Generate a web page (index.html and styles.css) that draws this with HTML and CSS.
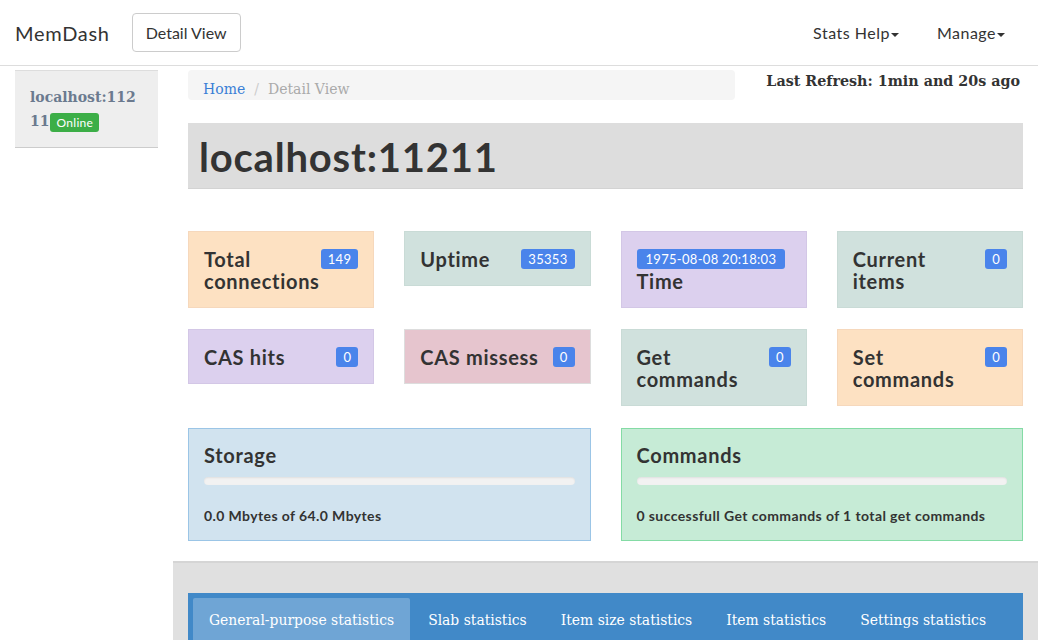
FILE: index.html
```html
<!DOCTYPE html>
<html>
<head>
<meta charset="utf-8">
<link rel="stylesheet" href="styles.css">
</head>
<body>
<nav class="navbar">
  <div class="brand">MemDash</div>
  <div class="nav-btn">Detail View</div>
  <div class="nav-spacer"></div>
  <div class="nav-item">Stats Help<span class="caret"></span></div>
  <div class="nav-item">Manage<span class="caret"></span></div>
</nav>
<div class="layout">
  <aside class="sidebar">
    <div class="server">localhost:11211<span class="online">Online</span></div>
  </aside>
  <main class="main">
    <div class="content">
      <div class="top-row">
        <div class="breadcrumb"><span class="crumb-link">Home</span><span class="crumb-sep">/</span><span class="crumb-active">Detail View</span></div>
        <div class="refresh">Last Refresh: 1min and 20s ago</div>
      </div>
      <div class="page-header"><h1>localhost:11211</h1></div>
      <div class="cards">
        <div class="card peach"><span class="badge">149</span><h4>Total connections</h4></div>
        <div class="card teal"><span class="badge">35353</span><h4>Uptime</h4></div>
        <div class="card lilac"><div class="badge-line"><span class="badge badge-block">1975-08-08 20:18:03</span></div><h4>Time</h4></div>
        <div class="card teal"><span class="badge">0</span><h4>Current items</h4></div>
      </div>
      <div class="cards">
        <div class="card lilac"><span class="badge">0</span><h4>CAS hits</h4></div>
        <div class="card pink"><span class="badge">0</span><h4>CAS missess</h4></div>
        <div class="card teal"><span class="badge">0</span><h4>Get commands</h4></div>
        <div class="card peach"><span class="badge">0</span><h4>Set commands</h4></div>
      </div>
      <div class="wide-cards">
        <div class="panel blue">
          <h4>Storage</h4>
          <div class="progress"></div>
          <p>0.0 Mbytes of 64.0 Mbytes</p>
        </div>
        <div class="panel green">
          <h4>Commands</h4>
          <div class="progress"></div>
          <p>0 successfull Get commands of 1 total get commands</p>
        </div>
      </div>
    </div>
    <div class="band">
      <div class="tabs">
        <div class="tab active">General-purpose statistics</div>
        <div class="tab">Slab statistics</div>
        <div class="tab">Item size statistics</div>
        <div class="tab">Item statistics</div>
        <div class="tab">Settings statistics</div>
      </div>
    </div>
  </main>
</div>
</body>
</html>
```
FILE: styles.css
```css
* { box-sizing: border-box; }
html, body { margin: 0; padding: 0; background: #fff; }
body {
  font-family: Lato, "Open Sans", sans-serif;
  color: #333;
  font-size: 14px;
  overflow: hidden;
  height: 640px;
}
.navbar {
  display: flex;
  align-items: center;
  height: 66px;
  border-bottom: 1px solid #ddd;
  padding: 0 15px;
}
.brand { font-size: 20px; color: #333; margin-right: 22px; letter-spacing: 0.7px; }
.nav-btn {
  font-size: 16px;
  height: 39px;
  line-height: 37px;
  padding: 0 13px;
  border: 1px solid #ccc;
  border-radius: 4px;
  color: #333;
}
.nav-spacer { flex: 1; }
.nav-item { font-size: 16px; color: #333; padding: 0 19px; letter-spacing: 0.5px; }
.nav-item:last-child { padding-right: 18px; }
.caret {
  display: inline-block;
  width: 0; height: 0;
  border-top: 4px solid #333;
  border-left: 4px solid transparent;
  border-right: 4px solid transparent;
  vertical-align: middle;
  margin-left: 1px;
}
.layout {
  display: flex;
  padding-top: 4px;
}
.sidebar {
  width: 173px;
  padding-left: 15px;
  flex: none;
}
.server {
  width: 143px;
  height: 78px;
  background: #eee;
  border-top: 1px solid #ddd;
  border-bottom: 1px solid #ccc;
  padding: 14px 15px 0 15px;
  font-family: "DejaVu Serif", serif;
  font-weight: bold;
  font-size: 14px;
  line-height: 24px;
  color: #6b7a8f;
  word-break: break-all;
}
.online {
  display: inline-block;
  background: #3cae47;
  color: #fff;
  font-family: Lato, sans-serif;
  font-weight: normal;
  font-size: 12px;
  line-height: 19px;
  height: 19px;
  padding: 0 6px;
  border-radius: 3px;
  margin-left: 1px;
  vertical-align: middle;
  letter-spacing: 0.3px;
  word-break: normal;
}
.main { flex: 1; width: 865px; }
.content { padding: 0 15px; }
.top-row {
  display: flex;
  justify-content: space-between;
  align-items: flex-start;
}
.breadcrumb {
  width: 547px;
  height: 30px;
  background: #f5f5f5;
  border-radius: 4px;
  padding: 0 15px;
  line-height: 39px;
  font-family: "DejaVu Serif", serif;
  font-size: 14px;
}
.crumb-link { color: #3a7fd5; }
.crumb-sep { color: #ccc; padding: 0 9px; }
.crumb-active { color: #aaa; }
.refresh {
  font-family: "DejaVu Serif", serif;
  font-weight: bold;
  font-size: 14.3px;
  line-height: 22px;
  padding-right: 3px;
}
.page-header {
  margin-top: 23px;
  background: #ddd;
  height: 66px;
  border-bottom: 1px solid #d3d3d3;
  padding: 0 11px;
}
.page-header h1 {
  margin: 0;
  font-size: 40px;
  line-height: 68px;
  font-weight: bold;
  color: #333;
  letter-spacing: 0.8px;
}
.cards {
  display: flex;
  align-items: flex-start;
  gap: 30px;
  margin-top: 42px;
}
.cards + .cards { margin-top: 21px; }
.card {
  flex: 1 1 0;
  padding: 16px 15px 15px 15px;
  border: 1px solid;
  min-height: 55px;
}
.card h4 {
  margin: 0;
  font-size: 20px;
  line-height: 22px;
  font-weight: bold;
  color: #333;
  letter-spacing: 0.7px;
}
.badge {
  float: right;
  background: #4a84eb;
  color: #fff;
  font-size: 13px;
  height: 20px;
  line-height: 20px;
  padding: 0 7px;
  border-radius: 3px;
  margin-top: 1px;
  margin-left: 8px;
  letter-spacing: 0.3px;
}
.badge-line { height: 22px; }
.badge-block { float: none; display: inline-block; padding: 0 9px; margin-left: 0; }
.peach { background: #fde1c2; border-color: #f6d8bc; }
.teal { background: #d0e1dd; border-color: #c9dbd6; }
.lilac { background: #dcd0ee; border-color: #d3c7e6; }
.pink { background: #e6c5ce; border-color: #ddd; }
.wide-cards {
  display: flex;
  gap: 30px;
  margin-top: 22px;
}
.panel {
  flex: 1 1 0;
  height: 113px;
  border: 1px solid;
  padding: 15px 15px 0 15px;
}
.panel h4 {
  margin: 0;
  font-size: 20px;
  line-height: 22px;
  font-weight: bold;
  letter-spacing: 0.7px;
}
.progress {
  margin-top: 11px;
  height: 8px;
  border-radius: 4px;
  background: #f2f2f2;
  box-shadow: inset 0 1px 2px rgba(0,0,0,0.08);
}
.panel p {
  margin: 22px 0 0 0;
  font-size: 14px;
  font-weight: bold;
  line-height: 18px;
  letter-spacing: 0.4px;
}
.blue { background: #d1e3ef; border-color: #9bc5e6; }
.green { background: #c6ebd6; border-color: #84dba5; }
.band {
  margin-top: 20px;
  background: #e0e0e0;
  border-top: 2px solid #d5d5d5;
  padding: 30px 15px 0 15px;
  height: 90px;
}
.tabs {
  background: #4189c8;
  padding: 5px 5px 0 5px;
  display: flex;
  gap: 2px;
  height: 60px;
}
.tab {
  padding: 0 16px;
  height: 42px;
  line-height: 44px;
  font-family: "DejaVu Serif", serif;
  font-size: 13.9px;
  color: #fff;
  border-radius: 2px 2px 0 0;
}
.tab.active { background: #6fa5d5; }
```
